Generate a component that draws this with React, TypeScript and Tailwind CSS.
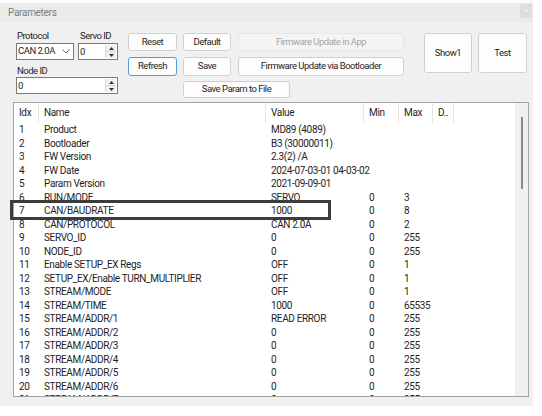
import React from "react";

type Row = { idx: number; name: string; value: string; min?: string; max?: string };

const rows: Row[] = [
  { idx: 1, name: "Product", value: "MD89 (4089)" },
  { idx: 2, name: "Bootloader", value: "B3 (30000011)" },
  { idx: 3, name: "FW Version", value: "2.3(2) /A" },
  { idx: 4, name: "FW Date", value: "2024-07-03-01 04-03-02" },
  { idx: 5, name: "Param Version", value: "2021-09-09-01" },
  { idx: 6, name: "RUN/MODE", value: "SERVO", min: "0", max: "3" },
  { idx: 7, name: "CAN/BAUDRATE", value: "1000", min: "0", max: "8" },
  { idx: 8, name: "CAN/PROTOCOL", value: "CAN 2.0A", min: "0", max: "2" },
  { idx: 9, name: "SERVO_ID", value: "0", min: "0", max: "255" },
  { idx: 10, name: "NODE_ID", value: "0", min: "0", max: "255" },
  { idx: 11, name: "Enable SETUP_EX Regs", value: "OFF", min: "0", max: "1" },
  { idx: 12, name: "SETUP_EX/Enable TURN_MULTIPLIER", value: "OFF", min: "0", max: "1" },
  { idx: 13, name: "STREAM/MODE", value: "OFF", min: "0", max: "1" },
  { idx: 14, name: "STREAM/TIME", value: "1000", min: "0", max: "65535" },
  { idx: 15, name: "STREAM/ADDR/1", value: "READ ERROR", min: "0", max: "255" },
  { idx: 16, name: "STREAM/ADDR/2", value: "0", min: "0", max: "255" },
  { idx: 17, name: "STREAM/ADDR/3", value: "0", min: "0", max: "255" },
  { idx: 18, name: "STREAM/ADDR/4", value: "0", min: "0", max: "255" },
  { idx: 19, name: "STREAM/ADDR/5", value: "0", min: "0", max: "255" },
  { idx: 20, name: "STREAM/ADDR/6", value: "0", min: "0", max: "255" },
  { idx: 21, name: "STREAM/ADDR/7", value: "0", min: "0", max: "255" },
];

const cols = "grid grid-cols-[25px_227px_98px_35px_34px_21px_1fr]";

function Spin() {
  return (
    <div className="flex flex-col w-[11px] h-full border-l border-[#d9d9d9] bg-[#f0f0f0]">
      <div className="flex-1 flex items-center justify-center border-b border-[#d9d9d9]">
        <svg width="5" height="3" viewBox="0 0 5 3">
          <path d="M0 3 L2.5 0 L5 3 Z" fill="#333" />
        </svg>
      </div>
      <div className="flex-1 flex items-center justify-center">
        <svg width="5" height="3" viewBox="0 0 5 3">
          <path d="M0 0 L2.5 3 L5 0 Z" fill="#333" />
        </svg>
      </div>
    </div>
  );
}

function Btn({
  children,
  className = "",
  focused = false,
  disabled = false,
}: {
  children: React.ReactNode;
  className?: string;
  focused?: boolean;
  disabled?: boolean;
}) {
  return (
    <button
      type="button"
      className={
        "flex items-center justify-center whitespace-nowrap rounded-[3px] border text-[9.5px] tracking-[-0.5px] " +
        (disabled
          ? "bg-[#f4f4f4] border-[#e6e6e6] text-[#a6a6a6] "
          : focused
          ? "bg-[#fdfdfd] border-[#5a9ad6] text-[#1e1e1e] "
          : "bg-[#fdfdfd] border-[#d0d0d0] text-[#1e1e1e] ") +
        className
      }
    >
      {children}
    </button>
  );
}

export default function App() {
  return (
    <div className="w-[542px] h-[416px] bg-white font-['Roboto','Liberation_Sans',Arial,sans-serif] text-[#1e1e1e]">
      <div className="relative w-[533px] h-[406px] bg-[#f0f0f0] flex flex-col">
        {/* title bar */}
        <div className="h-[22px] border-t-[3px] border-[#fafafa] bg-[#ebebeb] flex items-start justify-between pl-[8px] pr-[1px]">
          <span className="text-[10px] leading-[19px] tracking-[-0.3px] text-[#7d7d7d]">Parameters</span>
          <div className="mt-[1px] w-[12px] h-[14px] bg-[#dedede] flex items-center justify-center text-[8px] text-[#f4f4f4]">
            ×
          </div>
        </div>

        {/* controls */}
        <div className="h-[80px] flex pl-[16px] text-[9.5px] tracking-[-0.5px]">
          <div className="w-[102px] pt-[7px] flex flex-col">
            <div className="flex gap-[4px]">
              <div className="w-[58px] flex flex-col">
                <span className="h-[14px] leading-[14px] pl-[1px] whitespace-nowrap">Protocol</span>
                <div className="h-[17px] border border-[#7a7a7a] bg-white flex items-center justify-between pl-[1px] pr-[3px] whitespace-nowrap">
                  <span>CAN 2.0A</span>
                  <svg width="8" height="5" viewBox="0 0 8 5">
                    <path d="M0.5 0.5 L4 4 L7.5 0.5" fill="none" stroke="#666" strokeWidth="1" />
                  </svg>
                </div>
              </div>
              <div className="w-[40px] flex flex-col">
                <span className="h-[14px] leading-[14px] pl-[2px] whitespace-nowrap">Servo ID</span>
                <div className="h-[17px] border border-[#7a7a7a] bg-white flex justify-between pl-[1px] pr-[1px]">
                  <span className="leading-[15px]">0</span>
                  <div className="py-[1px] h-full">
                    <Spin />
                  </div>
                </div>
              </div>
            </div>
            <span className="mt-[4px] h-[13px] leading-[13px] pl-[1px] whitespace-nowrap">Node ID</span>
            <div className="h-[17px] border border-[#7a7a7a] bg-white flex justify-between pl-[1px] pr-[1px]">
              <span className="leading-[15px]">0</span>
              <div className="py-[1px] h-full">
                <Spin />
              </div>
            </div>
          </div>

          <div className="ml-[10px] pt-[11px] flex flex-col">
            <div className="flex h-[18px]">
              <Btn className="w-[49px]">Reset</Btn>
              <Btn className="w-[48px] ml-[6px]">Default</Btn>
              <Btn className="w-[166px] ml-[7px]" disabled>
                Firmware Update in App
              </Btn>
            </div>
            <div className="flex h-[19px] mt-[6px]">
              <Btn className="w-[49px]" focused>
                Refresh
              </Btn>
              <Btn className="w-[48px] ml-[6px]">Save</Btn>
              <Btn className="w-[166px] ml-[7px]">Firmware Update via Bootloader</Btn>
            </div>
            <div className="flex h-[17px] mt-[5px] pl-[55px]">
              <Btn className="w-[107px]">Save Param to File</Btn>
            </div>
          </div>

          <div className="ml-[20px] pt-[11px] flex gap-[6px]">
            <Btn className="w-[48px] h-[40px]">Show1</Btn>
            <Btn className="w-[49px] h-[40px]">Test</Btn>
          </div>
        </div>

        {/* parameter list */}
        <div className="ml-[13px] w-[516px] h-[295px] border border-[#a3a3a3] bg-white flex overflow-hidden">
          <div className="flex-1 flex flex-col text-[10px] tracking-[-0.35px]">
            <div className={cols + " h-[20px] shrink-0"}>
              {["Idx", "Name", "Value", "Min", "Max", "D.."].map((h) => (
                <div key={h} className="pl-[5px] leading-[20px] border-r border-[#e5e5e5]">
                  {h}
                </div>
              ))}
              <div />
            </div>
            {rows.map((r) => (
              <div key={r.idx} className={cols + " h-[13.5px] shrink-0 leading-[13.5px]"}>
                <div className="pl-[5px]">{r.idx}</div>
                <div className="pl-[5px] whitespace-nowrap">{r.name}</div>
                <div className="pl-[5px] whitespace-nowrap">{r.value}</div>
                <div className="pl-[5px]">{r.min ?? ""}</div>
                <div className="pl-[5px]">{r.max ?? ""}</div>
                <div />
                <div />
              </div>
            ))}
          </div>
          <div className="w-[13px] bg-[#f0f0f0] flex justify-center pt-[14px]">
            <div className="w-[2px] h-[72px] bg-[#8a8a8a]" />
          </div>
        </div>

        {/* highlight annotation */}
        <div className="absolute left-[10px] top-[200px] w-[321px] h-[20px] border-[3px] border-[#3c3c3c]" />
      </div>
    </div>
  );
}
